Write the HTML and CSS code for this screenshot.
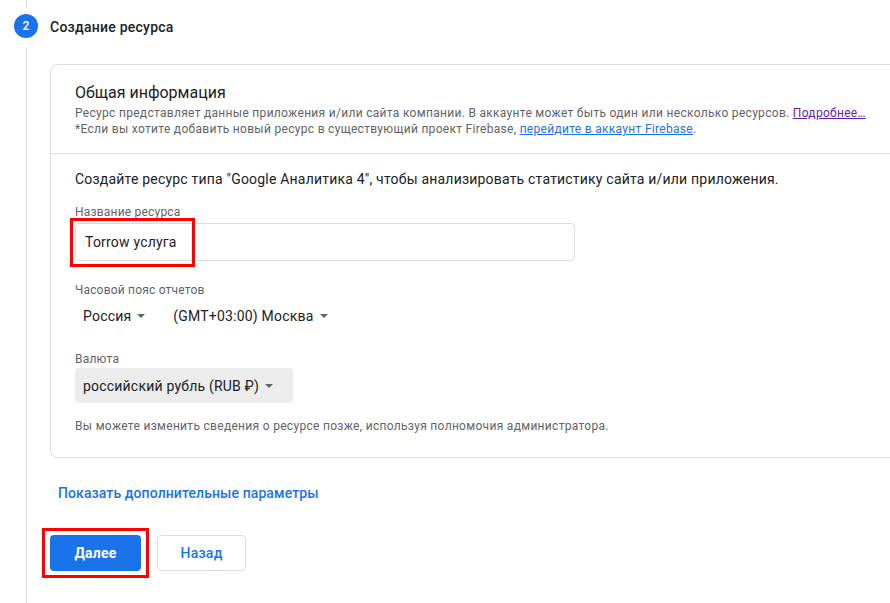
FILE: index.html
```html
<!DOCTYPE html>
<html lang="ru">
<head>
<meta charset="utf-8">
<title>Создание ресурса</title>
<link rel="stylesheet" href="styles.css">
</head>
<body>
<div class="step">
  <div class="rail">
    <div class="line-top"></div>
    <div class="num">2</div>
    <div class="line-bottom"></div>
  </div>
  <div class="content">
    <div class="step-title">Создание ресурса</div>
    <div class="card">
      <div class="card-head">
        <div class="card-title">Общая информация</div>
        <div class="desc">Ресурс представляет данные приложения и/или сайта компании. В аккаунте может быть один или несколько ресурсов. <a class="visited" href="#">Подробнее…</a></div>
        <div class="desc">*Если вы хотите добавить новый ресурс в существующий проект Firebase, <a class="link" href="#">перейдите в аккаунт Firebase</a>.</div>
      </div>
      <div class="card-body">
        <div class="intro">Создайте ресурс типа "Google Аналитика 4", чтобы анализировать статистику сайта и/или приложения.</div>
        <div class="label label-name">Название ресурса</div>
        <div class="input-wrap">
          <div class="input">Torrow услуга</div>
          <div class="mark mark-input"></div>
        </div>
        <div class="label label-tz">Часовой пояс отчетов</div>
        <div class="selects">
          <div class="select">Россия <span class="caret"></span></div>
          <div class="select">(GMT+03:00) Москва <span class="caret"></span></div>
        </div>
        <div class="label label-cur">Валюта</div>
        <div class="select select-filled">российский рубль (RUB ₽) <span class="caret"></span></div>
        <div class="note">Вы можете изменить сведения о ресурсе позже, используя полномочия администратора.</div>
      </div>
    </div>
    <div class="more">Показать дополнительные параметры</div>
    <div class="actions">
      <div class="btn-wrap">
        <button class="btn btn-primary">Далее</button>
        <div class="mark mark-btn"></div>
      </div>
      <button class="btn btn-outline">Назад</button>
    </div>
  </div>
</div>
</body>
</html>
```
FILE: styles.css
```css
html, body {
  margin: 0;
  padding: 0;
  background: #ffffff;
  overflow: hidden;
}
body {
  font-family: Roboto, "Noto Sans", "Liberation Sans", sans-serif;
  color: #202124;
  width: 890px;
  height: 603px;
}
.step {
  display: flex;
  min-height: 603px;
}
.rail {
  margin-left: 14px;
  width: 24px;
  margin-right: 12px;
  display: flex;
  flex-direction: column;
  align-items: center;
  flex-shrink: 0;
}
.line-top {
  width: 1px;
  height: 8px;
  background: #dadce0;
}
.num {
  margin-top: 6px;
  width: 24px;
  height: 24px;
  border-radius: 50%;
  background: #1a73e8;
  color: #fff;
  font-size: 12px;
  font-weight: 500;
  line-height: 24px;
  text-align: center;
}
.line-bottom {
  width: 1px;
  flex: 1;
  margin-top: 10px;
  background: #dadce0;
}
.content {
  flex: 1;
  min-width: 0;
}
.step-title {
  margin-top: 15px;
  height: 24px;
  line-height: 24px;
  font-size: 14px;
  font-weight: 500;
  letter-spacing: 0.25px;
  color: #202124;
}
.card {
  margin-top: 25px;
  width: 880px;
  border: 1px solid #dadce0;
  border-radius: 8px;
}
.card-head {
  padding: 16px 24px 16px 24px;
  border-bottom: 1px solid #dadce0;
}
.card-title {
  font-size: 16px;
  line-height: 24px;
  color: #202124;
}
.desc {
  font-size: 12px;
  line-height: 16px;
  letter-spacing: 0.3px;
  color: #5f6368;
}
.visited {
  color: #681da8;
  text-decoration: underline;
}
.link {
  color: #1a73e8;
  text-decoration: underline;
}
.card-body {
  padding: 15px 24px 23px 24px;
}
.intro {
  font-size: 14px;
  line-height: 20px;
  letter-spacing: 0.2px;
  color: #202124;
}
.label {
  font-size: 12px;
  line-height: 16px;
  letter-spacing: 0.2px;
  color: #5f6368;
}
.label-name { margin-top: 15px; }
.label-tz { margin-top: 21px; }
.label-cur { margin-top: 17px; }
.input-wrap {
  position: relative;
  margin-top: 3px;
  width: 500px;
}
.input {
  height: 36px;
  border: 1px solid #dadce0;
  border-radius: 4px;
  padding-left: 9px;
  font-size: 14px;
  line-height: 36px;
  letter-spacing: 0.2px;
  color: #202124;
}
.mark {
  position: absolute;
  box-sizing: border-box;
  border: 3px solid #ff0000;
}
.mark-input {
  left: -5px;
  top: -5px;
  width: 125px;
  height: 49px;
}
.selects {
  display: flex;
  gap: 12px;
}
.select {
  display: inline-flex;
  align-items: center;
  gap: 6px;
  height: 36px;
  padding: 0 8px;
  font-size: 14px;
  letter-spacing: 0.2px;
  color: #202124;
  box-sizing: border-box;
}
.select-filled {
  margin-top: 1px;
  height: 35px;
  width: 218px;
  background: #ececec;
  border-radius: 4px;
}
.caret {
  width: 0;
  height: 0;
  border-left: 4px solid transparent;
  border-right: 4px solid transparent;
  border-top: 4px solid #5f6368;
}
.note {
  margin-top: 15px;
  font-size: 12px;
  line-height: 16px;
  letter-spacing: 0.3px;
  color: #5f6368;
}
.more {
  margin-top: 25px;
  padding-left: 8px;
  font-size: 14px;
  line-height: 20px;
  font-weight: 500;
  letter-spacing: 0.1px;
  color: #1a73e8;
}
.actions {
  margin-top: 32px;
  display: flex;
  gap: 16px;
}
.btn-wrap {
  position: relative;
}
.btn {
  font-family: Roboto, "Noto Sans", "Liberation Sans", sans-serif;
  height: 36px;
  border-radius: 4px;
  font-size: 14px;
  font-weight: 500;
  letter-spacing: 0.25px;
  cursor: pointer;
}
.btn-primary {
  width: 91px;
  background: #1a73e8;
  color: #ffffff;
  border: none;
  font-weight: 700;
}
.btn-outline {
  width: 89px;
  background: #ffffff;
  color: #1a73e8;
  border: 1px solid #dadce0;
}
.mark-btn {
  left: -8px;
  top: -7px;
  width: 107px;
  height: 50px;
}
```
